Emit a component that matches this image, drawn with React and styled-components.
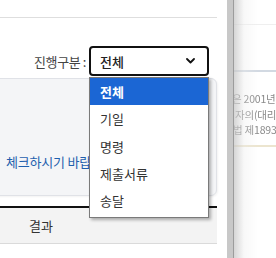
import React, {useState} from 'react'
import styled, {createGlobalStyle} from 'styled-components'

const GlobalStyle = createGlobalStyle`
  html, body {
    margin: 0;
    padding: 0;
    background: #fff;
  }
  body {
    font-family: "Noto Sans CJK KR", "Noto Sans", sans-serif;
    color: #333;
  }
`

const options = ['전체', '기일', '명령', '제출서류', '송달']

const backText = [
  {text: '은 2001년 1월', shift: -2},
  {text: '자의(대리인)', shift: 1},
  {text: '법 제1893조', shift: -1},
]

const Screen = styled.div`
  display: flex;
  width: 276px;
  height: 258px;
  overflow: hidden;
`

const Panel = styled.div`
  width: 227px;
  flex: none;
  display: flex;
  flex-direction: column;
  background: #fff;
  padding-right: 10px;
  box-sizing: border-box;
`

const TopStrip = styled.div`
  height: 17px;
  border-bottom: 1px solid #dedede;
  flex: none;
`

const FilterRow = styled.div`
  display: flex;
  justify-content: flex-end;
  align-items: center;
  gap: 3px;
  padding: 28px 8px 0 0;
  height: 30px;
  flex: none;
`

const Label = styled.span`
  font-size: 13px;
  color: #444;
  letter-spacing: -0.4px;
`

const SelectWrap = styled.div`
  position: relative;
  width: 120px;
  height: 30px;
  z-index: 5;
`

const SelectBox = styled.div`
  height: 100%;
  box-sizing: border-box;
  border: 2px solid #111;
  border-radius: 4px;
  background: #fff;
  display: flex;
  align-items: center;
  justify-content: space-between;
  padding: 0 12px 0 9px;
  font-size: 13px;
  font-weight: 500;
  color: #222;
`

const Menu = styled.ul`
  position: absolute;
  top: 31px;
  left: 0;
  width: 120px;
  margin: 0;
  padding: 0 0 3px;
  list-style: none;
  background: #fff;
  border: 1px solid #7a7a7a;
  box-sizing: border-box;
  box-shadow: 2px 2px 3px rgba(0, 0, 0, 0.3);
`

const Item = styled.li`
  height: 27.3px;
  display: flex;
  align-items: center;
  padding-left: 10px;
  font-size: 13px;
  font-weight: ${p => (p.$active ? 700 : 400)};
  color: ${p => (p.$active ? '#fff' : '#333')};
  background: ${p => (p.$active ? '#1b66d4' : 'transparent')};
`

const NoticeCard = styled.div`
  margin: 2px 0 0 -10px;
  height: 118px;
  flex: none;
  box-sizing: border-box;
  background: #f4f5f7;
  border: 1px solid #e0e2e7;
  border-radius: 6px;
  box-shadow: 1px 1px 2px rgba(0, 0, 0, 0.05);
  display: flex;
  align-items: flex-end;
  padding: 0 0 24px 15px;
`

const NoticeText = styled.span`
  font-size: 13px;
  color: #1f5fae;
  white-space: nowrap;
  letter-spacing: -0.2px;
`

const Table = styled.div`
  margin-top: 10px;
  border-top: 2px solid #111;
  flex: none;
`

const HeadRow = styled.div`
  display: flex;
  height: 35px;
  background: #f3f3f3;
  border-bottom: 1px solid #dadada;
`

const HeadCell = styled.div`
  width: ${p => p.$w}px;
  display: flex;
  align-items: center;
  justify-content: center;
  font-size: 13px;
  color: #333;
`

const ScrollTrack = styled.div`
  width: 6px;
  flex: none;
  background: #c8c8c8;
  border-right: 1px solid #9c9c9c;
`

const BackPage = styled.div`
  flex: 1;
  position: relative;
  display: flex;
  flex-direction: column;
  background: #fff;
  overflow: hidden;
  &::after {
    content: '';
    position: absolute;
    inset: 0;
    background: linear-gradient(to right, rgba(200, 200, 200, 0.75) 0, rgba(235, 235, 235, 0.35) 10px, rgba(255, 255, 255, 0) 24px);
    pointer-events: none;
  }
`

const BackTopLine = styled.div`
  height: 24px;
  border-bottom: 1px solid #efefef;
  flex: none;
`

const BackRule = styled.div`
  margin-top: 45px;
  height: 2px;
  background: #d2d9e2;
  flex: none;
`

const BackLines = styled.div`
  padding: 19px 0 0;
  display: flex;
  flex-direction: column;
`

const BackLine = styled.div`
  font-size: 10.5px;
  line-height: 15.5px;
  color: #8a8a8a;
  white-space: nowrap;
  letter-spacing: -0.2px;
  filter: blur(0.3px);
`

const BackBeige = styled.div`
  margin-top: 7px;
  height: 2px;
  background: #ece5cf;
  flex: none;
`

function Chevron() {
  return (
    <svg width="9" height="6" viewBox="0 0 9 6">
      <path d="M1 1 L4.5 4.5 L8 1" fill="none" stroke="#111" strokeWidth="1.8" strokeLinecap="round" strokeLinejoin="round" />
    </svg>
  )
}

export default function App() {
  const [selected] = useState(0)

  return (
    <>
      <GlobalStyle />
      <Screen>
        <Panel>
          <TopStrip />
          <FilterRow>
            <Label>진행구분 :</Label>
            <SelectWrap>
              <SelectBox>
                <span>{options[selected]}</span>
                <Chevron />
              </SelectBox>
              <Menu>
                {options.map((o, i) => (
                  <Item key={o} $active={i === selected}>{o}</Item>
                ))}
              </Menu>
            </SelectWrap>
          </FilterRow>
          <NoticeCard>
            <NoticeText>체크하시기 바랍니다.</NoticeText>
          </NoticeCard>
          <Table>
            <HeadRow>
              <HeadCell $w={82}>결과</HeadCell>
            </HeadRow>
          </Table>
        </Panel>
        <ScrollTrack />
        <BackPage>
          <BackTopLine />
          <BackRule />
          <BackLines>
            {backText.map(l => (
              <BackLine key={l.text} style={{marginLeft: l.shift}}>{l.text}</BackLine>
            ))}
          </BackLines>
          <BackBeige />
        </BackPage>
      </Screen>
    </>
  )
}
